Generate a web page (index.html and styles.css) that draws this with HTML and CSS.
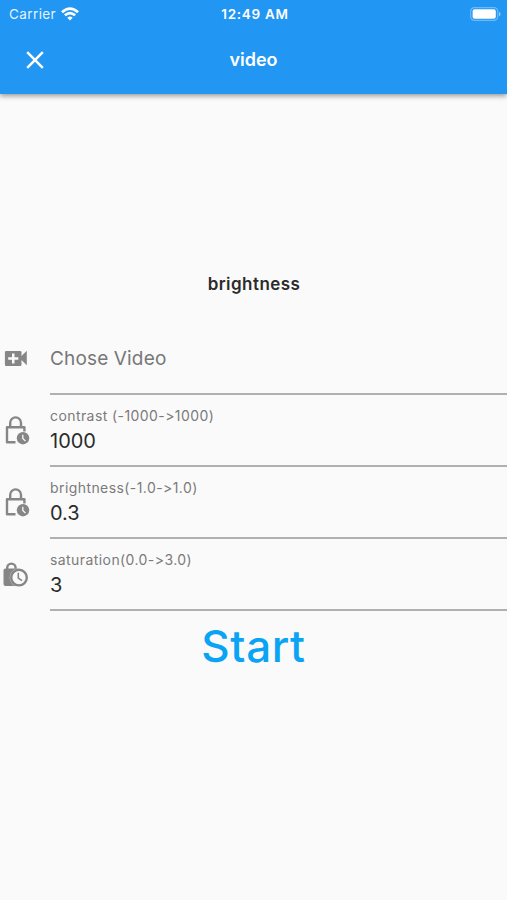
FILE: index.html
```html
<!DOCTYPE html>
<html lang="en">
<head>
<meta charset="utf-8">
<title>video</title>
<link rel="stylesheet" href="styles.css">
</head>
<body>
<header class="top">
  <div class="status">
    <div class="carrier"><span>Carrier</span>
      <svg width="18" height="14" viewBox="0 0 18 14" fill="none" stroke="#fff" stroke-width="2.8"><path d="M1 5.2Q9-2 17 5.2M3.900 8.300Q9 3.900 14.100 8.300"/><path d="M6.300 10.700Q9 8.300 11.700 10.700L9 13.500Z" fill="#fff" stroke="none"/></svg>
    </div>
    <time class="clock">12:49 AM</time>
    <svg class="battery" width="31" height="14" viewBox="0 0 31 14"><rect x=".7" y=".7" width="27" height="12.6" rx="3.6" fill="none" stroke="#fff" stroke-opacity=".35" stroke-width="1.2"/><rect x="2.6" y="2.2" width="23.2" height="9.6" rx="2" fill="#fff"/><path d="M29 4.700c2 .8 2 3.800 0 4.600z" fill="#fff" opacity=".5"/></svg>
  </div>
  <div class="bar">
    <svg class="close" width="18" height="18" viewBox="0 0 18 18" stroke="#fff" stroke-width="2.5"><path d="M1.2 1.2 16.8 16.8M16.8 1.2 1.2 16.8"/></svg>
    <h1 class="title">video</h1>
  </div>
</header>
<main class="content">
  <h2 class="heading">brightness</h2>
  <div class="row">
    <svg class="icon" width="32" height="32" viewBox="0 1 32 32"><path fill="#868686" fill-rule="evenodd" d="M6.200 9h14q1.300 0 1.300 1.300V14l5.300-5.200v14.400L21.500 18v4.700q0 1.300-1.300 1.300h-14q-1.300 0-1.300-1.300V10.300Q4.900 9 6.200 9ZM12 11.500V15.300H8.200v2.500H12v3.800h2.500v-3.800h3.800v-2.500h-3.800v-3.800Z"/></svg>
    <div class="field choose">Chose Video</div>
  </div>
  <div class="row">
    <svg class="icon" width="32" height="32" viewBox="0 0 32 32"><g fill="none" stroke="#868686" stroke-width="2.400" stroke-linejoin="round"><path d="M15.500 27.300H7V12.300h17.400V16.500M10.200 12V7.800a5.400 5.400 0 0 1 10.800 0V12"/></g><circle cx="23" cy="23.200" r="6.200" fill="#868686"/><path d="M22.800 19.700v3.800l2.700 2.600" fill="none" stroke="#fafafa" stroke-width="1.300"/></svg>
    <div class="field"><label class="label">contrast (-1000-&gt;1000)</label><div class="value">1000</div></div>
  </div>
  <div class="row">
    <svg class="icon" width="32" height="32" viewBox="0 0 32 32"><g fill="none" stroke="#868686" stroke-width="2.400" stroke-linejoin="round"><path d="M15.500 27.300H7V12.300h17.400V16.500M10.200 12V7.800a5.400 5.400 0 0 1 10.800 0V12"/></g><circle cx="23" cy="23.200" r="6.200" fill="#868686"/><path d="M22.800 19.700v3.800l2.700 2.600" fill="none" stroke="#fafafa" stroke-width="1.300"/></svg>
    <div class="field"><label class="label">brightness(-1.0-&gt;1.0)</label><div class="value">0.3</div></div>
  </div>
  <div class="row">
    <svg class="icon" width="32" height="32" viewBox="0 0 32 32"><path d="M5.500 9.500h12q2 0 2 2v15.500H5.500q-2 0-2-2V11.500q0-2 2-2Z" fill="#868686"/><path d="M7.200 11V8.800a4.200 4.200 0 0 1 8.400 0V11" fill="none" stroke="#868686" stroke-width="2.400"/><circle cx="19" cy="18.600" r="9.500" fill="#fafafa" opacity=".5"/><circle cx="19" cy="18.600" r="7.800" fill="#fafafa" stroke="#868686" stroke-width="2.400"/><path d="M18.300 13.800v5.300l3.800 2.600" fill="none" stroke="#868686" stroke-width="1.600"/></svg>
    <div class="field"><label class="label">saturation(0.0-&gt;3.0)</label><div class="value">3</div></div>
  </div>
  <button class="start">Start</button>
</main>
</body>
</html>
```
FILE: styles.css
```css
* { box-sizing: border-box; }
body {
  margin: 0;
  min-height: 900px;
  background: #fafafa;
  font-family: Inter, "Liberation Sans", sans-serif;
  color: #2b2b2b;
}
.top {
  height: 94px;
  background: #2196f3;
  color: #fff;
  box-shadow: 0 2px 5px rgba(0, 0, 0, .4);
}
.status {
  height: 27px;
  display: grid;
  grid-template-columns: 1fr auto 1fr;
  align-items: center;
  padding: 0 6px 0 9px;
}
.carrier {
  display: flex;
  align-items: center;
  gap: 5px;
  font-size: 13.5px;
  letter-spacing: .4px;
  color: #e4f3ff;
}
.clock { font-size: 13.5px; font-weight: 600; letter-spacing: .7px; }
.battery { justify-self: end; }
.bar {
  height: 65px;
  display: grid;
  grid-template-columns: 1fr auto 1fr;
  align-items: center;
  padding: 0 26px;
}
.title { margin: 0; font-size: 18px; font-weight: 600; }
.content { display: flex; flex-direction: column; }
.heading {
  margin: 180px 0 28px;
  padding-left: 1px;
  text-align: center;
  font-size: 17px;
  line-height: 21px;
  font-weight: 600;
  letter-spacing: .45px;
}
.row { height: 72px; display: flex; align-items: center; }
.icon { flex: none; margin-right: 18px; }
.field {
  flex: 1;
  height: 72px;
  padding-top: 12px;
  border-bottom: 2px solid #b0b0b0;
}
.choose { padding-top: 24px; font-size: 19px; line-height: 24px; letter-spacing: .15px; color: #777; }
.label { display: block; font-size: 14px; line-height: 17px; letter-spacing: .42px; color: #7b7b7b; }
.value { margin-top: 5px; font-size: 20px; line-height: 24px; }
.start {
  align-self: center;
  margin-top: 8px;
  padding: 0;
  border: 0;
  background: none;
  font: 500 44px/54px Inter, "Liberation Sans", sans-serif;
  letter-spacing: .6px;
  color: #0ba4f4;
}
```
